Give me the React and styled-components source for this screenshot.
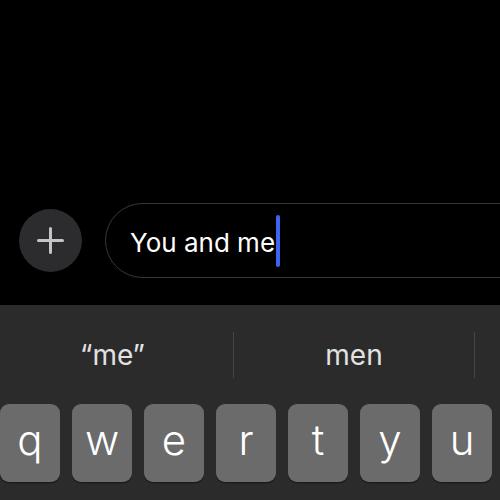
import React from 'react'
import styled, { createGlobalStyle } from 'styled-components'

const GlobalStyle = createGlobalStyle`
  html, body {
    margin: 0;
    padding: 0;
    background: #000;
  }
  * {
    box-sizing: border-box;
  }
`

const Screen = styled.div`
  width: 500px;
  height: 500px;
  overflow: hidden;
  display: flex;
  flex-direction: column;
  background: #000;
  font-family: Inter, "Liberation Sans", sans-serif;
`

const Thread = styled.div`
  flex: 1;
`

const Composer = styled.div`
  display: flex;
  align-items: center;
  gap: 23px;
  padding-left: 19px;
  height: 75px;
  margin-bottom: 27px;
`

const PlusButton = styled.button`
  flex: none;
  width: 63px;
  height: 63px;
  border-radius: 50%;
  border: none;
  padding: 0;
  background: #2c2c2e;
  display: flex;
  align-items: center;
  justify-content: center;
`

const Field = styled.div`
  flex: none;
  width: 440px;
  height: 75px;
  border: 1.5px solid #38383a;
  border-radius: 38px;
  display: flex;
  align-items: center;
  padding: 3px 0 0 24px;
  color: #fff;
  font-size: 26px;
`

const Caret = styled.span`
  display: inline-block;
  width: 4px;
  height: 52px;
  border-radius: 2px;
  background: #3d64f2;
  margin-left: 1px;
  margin-top: -3px;
`

const Keyboard = styled.div`
  height: 195px;
  background: #2b2b2b;
  display: flex;
  flex-direction: column;
`

const Suggestions = styled.div`
  height: 99px;
  display: grid;
  grid-template-columns: 233px 1px 240px 1px 1fr;
  align-items: center;
`

const Suggestion = styled.div`
  text-align: center;
  color: #e2e2e2;
  font-size: 28px;
  margin-left: ${(p) => (p.$quoted ? '-8px' : '0')};
`

const Divider = styled.div`
  width: 1px;
  height: 46px;
  background: #454545;
`

const KeyRow = styled.div`
  display: flex;
  gap: 12px;
`

const Key = styled.div`
  flex: none;
  width: 60px;
  height: 78px;
  border-radius: 9px;
  background: #6b6b6b;
  box-shadow: 0 1.5px 0 #1c1c1c;
  color: #fff;
  font-size: 42px;
  font-weight: 300;
  display: flex;
  align-items: center;
  justify-content: center;
  padding-bottom: 8px;
`

const PlusIcon = () => (
  <svg width="27" height="27" viewBox="0 0 27 27">
    <path d="M13.5 1.5v24M1.5 13.5h24" stroke="#c4c4c4" strokeWidth="3" strokeLinecap="round" />
  </svg>
)

const keys = ['q', 'w', 'e', 'r', 't', 'y', 'u']

export default function App() {
  return (
    <>
      <GlobalStyle />
      <Screen>
        <Thread />
        <Composer>
          <PlusButton aria-label="Add">
            <PlusIcon />
          </PlusButton>
          <Field>
            You and me
            <Caret />
          </Field>
        </Composer>
        <Keyboard>
          <Suggestions>
            <Suggestion $quoted>“me”</Suggestion>
            <Divider />
            <Suggestion>men</Suggestion>
            <Divider />
            <Suggestion />
          </Suggestions>
          <KeyRow>
            {keys.map((k) => (
              <Key key={k}>{k}</Key>
            ))}
          </KeyRow>
        </Keyboard>
      </Screen>
    </>
  )
}
